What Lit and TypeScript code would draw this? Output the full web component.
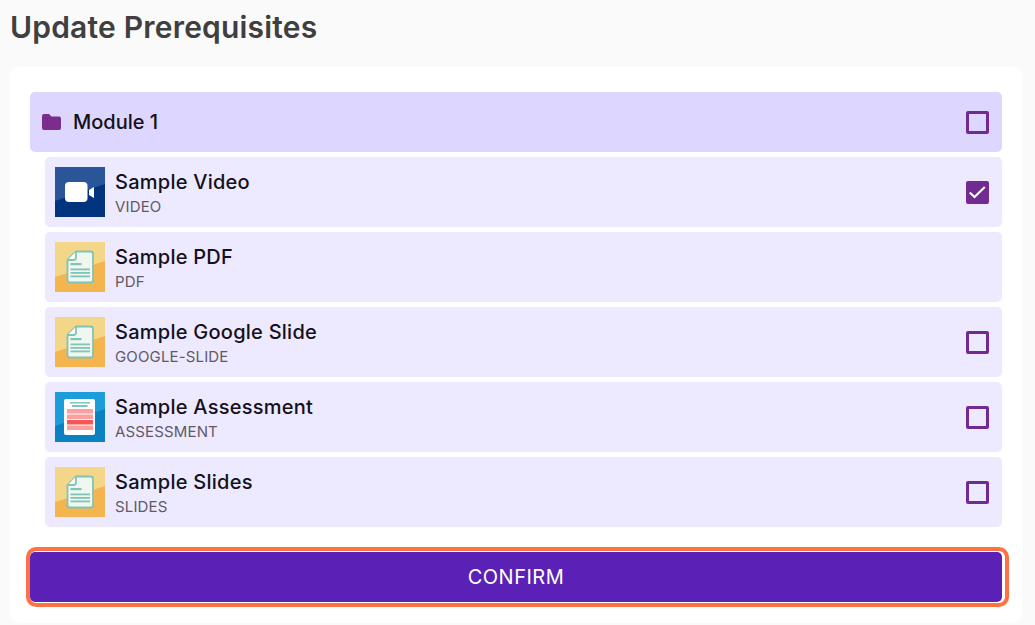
import { LitElement, html, css, svg } from "lit";
import { customElement } from "lit/decorators.js";

type Kind = "video" | "doc" | "assessment";
type Check = "on" | "off" | "none";
interface Item { title: string; sub: string; kind: Kind; check: Check; }

const items: Item[] = [
  { title: "Sample Video", sub: "VIDEO", kind: "video", check: "on" },
  { title: "Sample PDF", sub: "PDF", kind: "doc", check: "none" },
  { title: "Sample Google Slide", sub: "GOOGLE-SLIDE", kind: "doc", check: "off" },
  { title: "Sample Assessment", sub: "ASSESSMENT", kind: "assessment", check: "off" },
  { title: "Sample Slides", sub: "SLIDES", kind: "doc", check: "off" },
];

const thumbs: Record<Kind, unknown> = {
  video: svg`
    <rect width="50" height="50" fill="#02337e"/>
    <path d="M0 0H50V17L0 34Z" fill="#2a5598"/>
    <rect x="10" y="15" width="22.500" height="20" rx="4" fill="#fff"/>
    <path d="M34 23L39 20V31L34 28Z" fill="#fff"/>`,
  doc: svg`
    <rect width="50" height="50" fill="#f4b54e"/>
    <path d="M0 0H50V19L0 35Z" fill="#f4d688"/>
    <path d="M21 9.500H35.500Q38 9.500 38 12V38Q38 40.500 35.500 40.500H15Q12.500 40.500 12.500 38V18Z" fill="#f0f7ef" stroke="#7fc4b8" stroke-width="1.800" stroke-linejoin="round"/>
    <path d="M21 9.500V15.500Q21 18 18.500 18H12.500" fill="#fdfaf0" stroke="#7fc4b8" stroke-width="1.800"/>
    <rect x="15.500" y="21" width="11" height="2.200" fill="#7fc4b8"/>
    <rect x="15.500" y="26.500" width="19.500" height="1.800" fill="#7fc4b8"/>
    <rect x="15.500" y="30" width="19.500" height="1.800" fill="#7fc4b8"/>
    <rect x="15.500" y="33.500" width="19.500" height="1.800" fill="#7fc4b8"/>`,
  assessment: svg`
    <rect width="50" height="50" fill="#0a81c0"/>
    <path d="M0 0H50V17L0 34Z" fill="#1c9cd8"/>
    <rect x="9" y="7" width="31" height="36" rx="2" fill="#fff"/>
    <rect x="15" y="10" width="20" height="1.500" fill="#7fc4b8"/>
    <rect x="17" y="13" width="15.500" height="2" fill="#7fc4b8"/>
    <rect x="12" y="17" width="26" height="4.500" fill="#fe9f9f"/>
    <rect x="12" y="22.500" width="26" height="4.500" fill="#fe9f9f"/>
    <rect x="12" y="28" width="26" height="4.500" fill="#f65555"/>
    <rect x="12" y="33.500" width="26" height="4.500" fill="#fe9f9f"/>`,
};

@customElement("app-root")
export class AppRoot extends LitElement {
  static styles = css`
    :host {
      display: block;
      height: 625px;
      overflow: hidden;
      background: #fafafa;
      font-family: "Inter", "Liberation Sans", sans-serif;
      box-sizing: border-box;
      padding: 0 13px 2px 10px;
    }
    h1 {
      margin: 0;
      height: 67px;
      padding-top: 10px;
      box-sizing: border-box;
      font-size: 30px;
      line-height: 34px;
      font-weight: 600;
      letter-spacing: 0.2px;
      color: #3f3f3f;
    }
    .card {
      background: #fff;
      border-radius: 10px;
      padding: 25px 20px 21px;
      height: 556px;
      box-sizing: border-box;
      display: flex;
      flex-direction: column;
    }
    .list {
      display: flex;
      flex-direction: column;
      gap: 5px;
    }
    .module {
      height: 60px;
      background: #ddd6fe;
      border-radius: 5px;
      display: flex;
      align-items: center;
      padding: 0 13px 0 12px;
    }
    .folder {
      width: 19px;
      height: 16px;
      margin-right: 12px;
      flex: none;
    }
    .module-name {
      flex: 1;
      font-size: 20px;
      font-weight: 500;
      color: #14101c;
    }
    .row {
      margin-left: 15px;
      height: 70px;
      background: #ede9fe;
      border-radius: 5px;
      display: flex;
      align-items: center;
      padding: 0 13px 0 10px;
    }
    .thumb {
      width: 50px;
      height: 50px;
      flex: none;
      margin-right: 10px;
      display: block;
    }
    .text {
      flex: 1;
      min-width: 0;
      padding-top: 3px;
    }
    .title {
      font-size: 20px;
      line-height: 24px;
      font-weight: 500;
      letter-spacing: 0.25px;
      color: #14101c;
    }
    .sub {
      font-size: 15px;
      line-height: 20px;
      letter-spacing: 0.15px;
      margin-top: 3px;
      color: #5f5a66;
    }
    .check {
      width: 23px;
      height: 23px;
      box-sizing: border-box;
      border: 3px solid #702a92;
      border-radius: 2px;
      flex: none;
      display: block;
    }
    .check.on {
      background: #702a92;
    }
    .check svg {
      display: block;
      width: 17px;
      height: 17px;
      overflow: visible;
    }
    button {
      position: relative;
      margin-top: auto;
      height: 50px;
      border: none;
      border-radius: 5px;
      background: #5b21b6;
      color: #fff;
      font: inherit;
      font-size: 20px;
      letter-spacing: 0.5px;
      padding: 0;
      box-shadow: 0 0 0 1.5px #fff;
    }
    button::after {
      content: "";
      position: absolute;
      inset: -5px -7px -5px -4px;
      border: 4px solid #ff7043;
      border-radius: 10px;
      pointer-events: none;
    }
  `;

  private renderCheck(c: Check) {
    if (c === "none") return null;
    return html`<span class="check ${c}">
      ${c === "on"
        ? html`<svg viewBox="0 0 17 17"><path d="M0.800 8.500L5.500 13L15.800 3" fill="none" stroke="#fff" stroke-width="2.200"/></svg>`
        : null}
    </span>`;
  }

  render() {
    return html`
      <h1>Update Prerequisites</h1>
      <div class="card">
        <div class="list">
          <div class="module">
            <svg class="folder" viewBox="0 0 19 16">
              <path d="M0 2Q0 0 2 0H7L9.500 2.500H17Q19 2.500 19 4.500V14Q19 16 17 16H2Q0 16 0 14Z" fill="#7b2d8e"/>
            </svg>
            <span class="module-name">Module 1</span>
            ${this.renderCheck("off")}
          </div>
          ${items.map(
            (it) => html`
              <div class="row">
                <svg class="thumb" viewBox="0 0 50 50">${thumbs[it.kind]}</svg>
                <div class="text">
                  <div class="title">${it.title}</div>
                  <div class="sub">${it.sub}</div>
                </div>
                ${this.renderCheck(it.check)}
              </div>
            `
          )}
        </div>
        <button>CONFIRM</button>
      </div>
    `;
  }
}
